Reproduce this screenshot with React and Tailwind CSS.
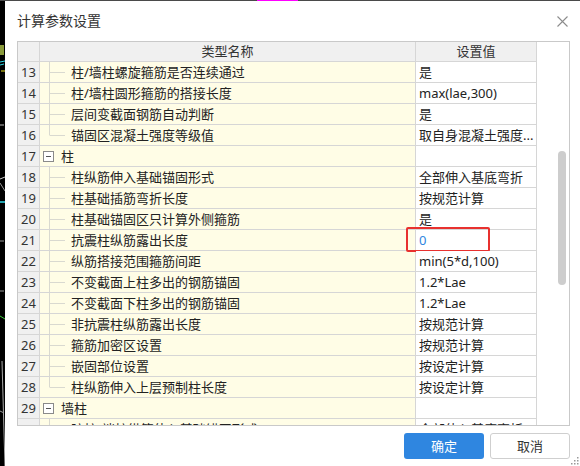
import React from 'react';

const rows = [
  { n: 13, name: '柱/墙柱螺旋箍筋是否连续通过', value: '是' },
  { n: 14, name: '柱/墙柱圆形箍筋的搭接长度', value: 'max(lae,300)' },
  { n: 15, name: '层间变截面钢筋自动判断', value: '是' },
  { n: 16, name: '锚固区混凝土强度等级值', value: '取自身混凝土强度...', last: true },
  { n: 17, name: '柱', group: true },
  { n: 18, name: '柱纵筋伸入基础锚固形式', value: '全部伸入基底弯折' },
  { n: 19, name: '柱基础插筋弯折长度', value: '按规范计算' },
  { n: 20, name: '柱基础锚固区只计算外侧箍筋', value: '是' },
  { n: 21, name: '抗震柱纵筋露出长度', value: '0', marked: true },
  { n: 22, name: '纵筋搭接范围箍筋间距', value: 'min(5*d,100)' },
  { n: 23, name: '不变截面上柱多出的钢筋锚固', value: '1.2*Lae' },
  { n: 24, name: '不变截面下柱多出的钢筋锚固', value: '1.2*Lae' },
  { n: 25, name: '非抗震柱纵筋露出长度', value: '按规范计算' },
  { n: 26, name: '箍筋加密区设置', value: '按规范计算' },
  { n: 27, name: '嵌固部位设置', value: '按设定计算' },
  { n: 28, name: '柱纵筋伸入上层预制柱长度', value: '按设定计算', last: true },
  { n: 29, name: '墙柱', group: true },
  { n: 30, name: '暗柱/端柱纵筋伸入基础锚固形式', value: '全部伸入基底弯折' },
];

const font = { fontFamily: '"Noto Sans", "Noto Sans CJK SC", sans-serif' };

function TreeLine({ last }) {
  return (
    <svg width="31" height="20" className="shrink-0">
      <line x1="9.5" y1="0" x2="9.5" y2={last ? 10 : 20} stroke="#d9d9d0" strokeWidth="1" />
      <line x1="9.5" y1="10.5" x2="25" y2="10.5" stroke="#d9d9d0" strokeWidth="1" />
    </svg>
  );
}

function Row({ r }) {
  return (
    <div className="flex h-[21px] shrink-0 border-b border-[#d6d6d6]">
      <div className="w-[22px] shrink-0 border-r border-[#d6d6d6] bg-[#f0f0f0] flex items-center justify-center text-[13px] leading-none text-[#333]">
        {r.n}
      </div>
      <div className="w-[376px] shrink-0 border-r border-[#d6d6d6] bg-[#fffde6] flex items-center text-[13px] leading-none text-[#222]">
        {r.group ? (
          <div className="flex items-center pl-[3px] gap-[7px]">
            <div className="w-[11px] h-[11px] border border-[#8a8a8a] bg-white flex items-center justify-center">
              <div className="w-[5px] h-px bg-[#555]" />
            </div>
            <span>{r.name}</span>
          </div>
        ) : (
          <>
            <TreeLine last={r.last} />
            <span>{r.name}</span>
          </>
        )}
      </div>
      <div className="w-[121px] shrink-0 border-r border-[#d6d6d6] bg-white flex items-center pl-[3px] text-[13px] leading-none text-[#222] relative">
        <span className={r.marked ? 'text-[#2f86e0]' : ''}>{r.value}</span>
        {r.marked && (
          <div className="absolute left-[-10px] top-[-3px] w-[84px] h-[25px] border-2 border-[#e8312f] rounded-[2px]" />
        )}
      </div>
    </div>
  );
}

export default function App() {
  return (
    <div className="w-[580px] h-[466px] bg-black flex flex-col overflow-hidden" style={font}>
      {/* desktop strip behind the dialog */}
      <div className="h-[1px] shrink-0 bg-[#4a4a4a] flex">
        <div className="ml-[257px] w-[41px] bg-[#ff00ff]" />
      </div>
      <div className="flex flex-1">
        <div className="w-[5px] shrink-0">
          <svg width="5" height="465">
            <rect x="0" y="44" width="4" height="10" fill="#8a9a3a" />
            <line x1="0" y1="61" x2="5" y2="60" stroke="#2fd8e8" strokeWidth="1" />
            <line x1="0" y1="64" x2="4" y2="63" stroke="#2fd8e8" strokeWidth="1" />
            <line x1="1" y1="70" x2="5" y2="70" stroke="#e8e020" strokeWidth="1" />
            <line x1="0" y1="124" x2="4" y2="124" stroke="#bbb" strokeWidth="1" />
            <line x1="0" y1="178" x2="5" y2="176" stroke="#ccc" strokeWidth="1" />
            <line x1="0" y1="182" x2="5" y2="190" stroke="#999" strokeWidth="1" />
            <line x1="0" y1="201" x2="5" y2="201" stroke="#2fd8e8" strokeWidth="1.5" />
            <line x1="0" y1="240" x2="4" y2="240" stroke="#999" strokeWidth="1" />
            <line x1="0" y1="290" x2="4" y2="290" stroke="#999" strokeWidth="1" />
            <line x1="0" y1="315" x2="5" y2="318" stroke="#3ac83a" strokeWidth="1" />
            <line x1="2" y1="360" x2="5" y2="466" stroke="#aaa" strokeWidth="1" />
            <line x1="0" y1="410" x2="4" y2="412" stroke="#999" strokeWidth="1" />
          </svg>
        </div>

        <div className="flex-1 bg-white flex flex-col relative">
          <div className="h-[40px] shrink-0 flex items-center justify-between pl-[12px] pr-[12px]">
            <span className="text-[14px] text-[#333] leading-none">计算参数设置</span>
            <svg width="11" height="11" viewBox="0 0 11 11">
              <path d="M0.5 0.5 L10.5 10.5 M10.5 0.5 L0.5 10.5" stroke="#8c8c8c" strokeWidth="1.1" fill="none" />
            </svg>
          </div>

          <div className="ml-[12px] w-[553px] h-[385px] shrink-0 border border-[#c9c9c9] flex">
            <div className="w-[519px] shrink-0 flex flex-col overflow-hidden">
              <div className="flex h-[20px] shrink-0 border-b border-[#d6d6d6] bg-[#f0f0f0] text-[13px] leading-none text-[#333]">
                <div className="w-[22px] shrink-0 border-r border-[#d6d6d6]" />
                <div className="w-[376px] shrink-0 border-r border-[#d6d6d6] flex items-center justify-center">类型名称</div>
                <div className="w-[121px] shrink-0 border-r border-[#d6d6d6] flex items-center justify-center">设置值</div>
              </div>
              {rows.map(r => <Row key={r.n} r={r} />)}
            </div>
            <div className="flex-1 bg-white pt-[109px] pl-[21px]">
              <div className="w-[8px] h-[134px] rounded-full bg-[#cdcdcd]" />
            </div>
          </div>

          <div className="flex justify-end gap-[6px] pr-[10px] mt-[7px]">
            <button className="w-[80px] h-[26px] rounded-[3px] bg-[#2f86e0] text-white text-[13px] leading-none">确定</button>
            <button className="w-[80px] h-[26px] rounded-[3px] border border-[#cfcfcf] bg-white text-[#333] text-[13px] leading-none">取消</button>
          </div>

          <svg className="absolute right-[1px] bottom-[1px]" width="8" height="8">
            <rect x="6" y="0" width="1.5" height="1.5" fill="#999" />
            <rect x="3" y="3" width="1.5" height="1.5" fill="#999" />
            <rect x="6" y="3" width="1.5" height="1.5" fill="#999" />
            <rect x="0" y="6" width="1.5" height="1.5" fill="#999" />
            <rect x="3" y="6" width="1.5" height="1.5" fill="#999" />
            <rect x="6" y="6" width="1.5" height="1.5" fill="#999" />
          </svg>
        </div>
      </div>
    </div>
  );
}
